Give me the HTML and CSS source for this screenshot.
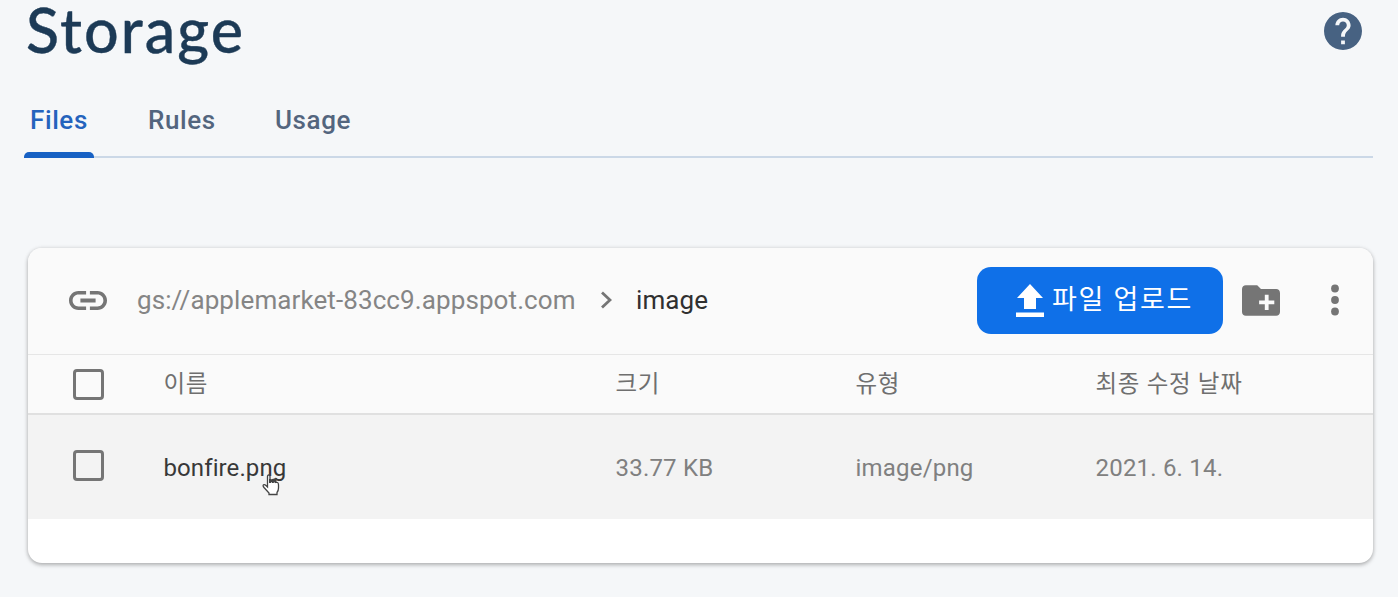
FILE: index.html
```
<!DOCTYPE html>
<html lang="ko">
<head>
<meta charset="utf-8">
<title>Storage</title>
<link rel="stylesheet" href="styles.css">
</head>
<body>
<header class="page-header">
  <h1 class="page-title">Storage</h1>
  <svg class="help" viewBox="2 2 20 20"><path d="M12 2C6.48 2 2 6.48 2 12s4.48 10 10 10 10-4.480 10-10S17.520 2 12 2zm1 17h-2v-2h2v2zm2.070-7.750l-.9.920C13.450 12.900 13 13.500 13 15h-2v-.5c0-1.100.450-2.100 1.170-2.830l1.240-1.260c.370-.360.590-.860.590-1.410 0-1.100-.9-2-2-2s-2 .9-2 2H8c0-2.210 1.790-4 4-4s4 1.790 4 4c0 .880-.360 1.680-.930 2.250z"/></svg>
</header>
<nav class="tabs">
  <a class="tab tab-active">Files</a>
  <a class="tab tab-rules">Rules</a>
  <a class="tab tab-usage">Usage</a>
</nav>
<main class="card">
  <div class="toolbar">
    <svg class="link-icon" viewBox="2 7 20 10"><path d="M3.900 12c0-1.710 1.390-3.100 3.100-3.100h4V7H7c-2.760 0-5 2.240-5 5s2.240 5 5 5h4v-1.900H7c-1.710 0-3.100-1.390-3.100-3.100zM8 13h8v-2H8v2zm9-6h-4v1.900h4c1.710 0 3.100 1.390 3.100 3.100s-1.390 3.100-3.100 3.100h-4V17h4c2.760 0 5-2.240 5-5s-2.240-5-5-5z"/></svg>
    <span class="bucket">gs://applemarket-83cc9.appspot.com</span>
    <svg class="chevron" viewBox="0 0 12 18"><path d="M2 1.500L10 9L2 16.500"/></svg>
    <span class="folder">image</span>
    <button class="upload">
      <svg class="upload-icon" viewBox="0 0 28 33"><path d="M14 0L27 14H20V25H8V14H1zM0 28.500H28V33H0z"/></svg>
      <span>파일 업로드</span>
    </button>
    <svg class="new-folder" viewBox="2 4 20 16"><path d="M20 6h-8l-2-2H4c-1.110 0-1.990.890-1.990 2L2 18c0 1.110.890 2 2 2h16c1.110 0 2-.890 2-2V8c0-1.110-.890-2-2-2zm-1 8h-3v3h-2v-3h-3v-2h3V9h2v3h3v2z"/></svg>
    <svg class="more" viewBox="0 0 8 32"><circle cx="4" cy="4.500" r="3.900"/><circle cx="4" cy="16" r="3.900"/><circle cx="4" cy="27.500" r="3.900"/></svg>
  </div>
  <div class="row head">
    <i class="check"></i><span>이름</span><span>크기</span><span>유형</span><span>최종 수정 날짜</span>
  </div>
  <div class="row item">
    <i class="check"></i>
    <span class="name">bonfire.png
      <svg class="cursor" viewBox="0 0 18 22"><path d="M5.500 13V2.500Q5.500 1 6.700 1T8 2.500V8Q9.500 6.800 10.800 8Q12.500 7 13.500 8.500Q16.500 7.500 16.500 11V14Q16.500 16.500 15 18.500V20.500H7V19L2 13.500Q.5 11.500 1.500 10.800T4 11.500z"/><path class="fingers" d="M8 5V9M10.800 5V9M13.500 5V8M8 6.500L15 5"/></svg>
    </span>
    <span>33.77 KB</span><span>image/png</span><span>2021. 6. 14.</span>
  </div>
</main>
</body>
</html>
```
FILE: styles.css
```
* { box-sizing: border-box; }
body {
  margin: 0;
  height: 597px;
  overflow: hidden;
  background: #f5f7f9;
  font-family: Roboto, "Noto Sans CJK KR", sans-serif;
}
svg { display: block; flex: none; }
.page-header {
  display: flex;
  justify-content: space-between;
  height: 84px;
  padding: 0 36px 0 26px;
}
.page-title {
  margin: 0;
  font: 500 61px/60px Lato, sans-serif;
  letter-spacing: 2.100px;
  color: #1c3a56;
  -webkit-text-stroke: 0.400px #1c3a56;
}
.help { width: 38px; height: 38px; margin-top: 12px; fill: #476282; }
.tabs {
  display: flex;
  height: 74px;
  margin: 0 25px 0 24px;
  border-bottom: 2px solid #cbd8e7;
  font-size: 26px;
  font-weight: 500;
  line-height: 72px;
  letter-spacing: 0.600px;
  color: #53657e;
}
.tab-active {
  position: relative;
  width: 70px;
  padding-left: 6px;
  color: #2463bd;
}
.tab-active::after {
  content: "";
  position: absolute;
  left: 0;
  right: 0;
  bottom: -2px;
  height: 6px;
  border-radius: 5px 5px 0 0;
  background: #1761c4;
}
.tab-rules { margin-left: 54px; width: 127px; }
.card {
  height: 315px;
  margin: 90px 25px 0 28px;
  overflow: hidden;
  background: #fff;
  border-radius: 14px;
  box-shadow: 0 2px 4px rgba(0, 0, 0, .26), 0 0 4px rgba(0, 0, 0, .1);
}
.toolbar {
  display: flex;
  align-items: center;
  height: 107px;
  padding: 0 34px 2px 41px;
  background: #fafafa;
  border-bottom: 1px solid #e6e6e6;
  font-size: 26px;
}
.link-icon { width: 38px; height: 19px; fill: #757575; }
.bucket { width: 463px; margin-left: 30px; color: #858585; letter-spacing: 0.100px; }
.chevron { width: 12px; height: 18px; fill: none; stroke: #757575; stroke-width: 2.800px; }
.folder { margin-left: 24px; color: #303030; letter-spacing: 0.100px; }
.upload {
  display: flex;
  align-items: center;
  gap: 8px;
  width: 246px;
  height: 67px;
  margin-left: auto;
  padding: 0 0 0 39px;
  border: 0;
  border-radius: 14px;
  background: #0f70e8;
  color: #fff;
  font: 400 27px/60px Roboto, "Noto Sans CJK KR", sans-serif;
  letter-spacing: 1.700px;
}
.upload span { white-space: nowrap; }
.upload-icon { width: 28px; height: 33px; fill: #fff; }
.new-folder { width: 38px; height: 31px; margin-left: 19px; fill: #757575; }
.more { width: 8px; height: 32px; margin-left: 51px; fill: #757575; }
.row {
  display: grid;
  grid-template-columns: 91px 452px 240px 240px 1fr;
  align-items: center;
  padding-left: 45px;
  font-size: 24px;
  letter-spacing: 0.200px;
  color: #808080;
}
.row > span { margin-left: -0.500px; }
.head {
  height: 60px;
  background: #fafafa;
  border-bottom: 2px solid #e0e0e0;
  color: #6f6f6f;
  font-size: 23.500px;
  letter-spacing: 0.700px;
}
.head > span { margin-bottom: 4px; }
.check { width: 31px; height: 31px; border: 3px solid #757575; border-radius: 4px; }
.item { height: 104px; background: #f3f3f3; }
.item > span { margin-top: 2px; }
.item .check { margin-bottom: 4px; }
.name { position: relative; color: #383838; letter-spacing: 0.100px; }
.cursor { position: absolute; left: 98px; top: 20px; width: 18px; height: 22px; fill: #fff; stroke: #444; stroke-width: 1.300px; }
.fingers { fill: none; stroke-width: 2px; }
```
